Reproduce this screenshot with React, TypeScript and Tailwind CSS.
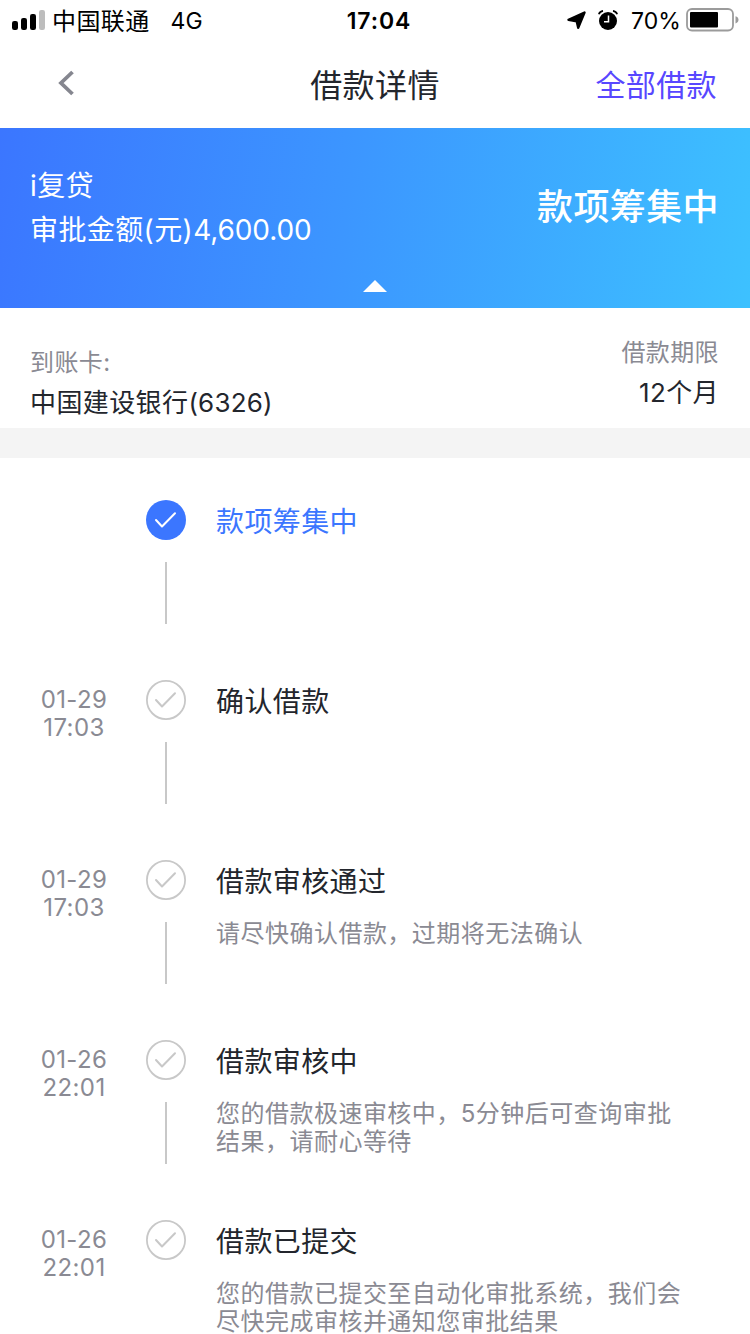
type Step = {
  title: string;
  date?: string;
  time?: string;
  lines?: string[];
  active?: boolean;
};

const STEPS: Step[] = [
  { title: "款项筹集中", active: true },
  { title: "确认借款", date: "01-29", time: "17:03" },
  {
    title: "借款审核通过",
    date: "01-29",
    time: "17:03",
    lines: ["请尽快确认借款，过期将无法确认"],
  },
  {
    title: "借款审核中",
    date: "01-26",
    time: "22:01",
    lines: ["您的借款极速审核中，5分钟后可查询审批", "结果，请耐心等待"],
  },
  {
    title: "借款已提交",
    date: "01-26",
    time: "22:01",
    lines: ["您的借款已提交至自动化审批系统，我们会", "尽快完成审核并通知您审批结果"],
  },
];

export default function App() {
  return (
    <main
      lang="zh-CN"
      className="h-[1334px] w-[750px] overflow-hidden bg-white font-[Inter,'Noto_Sans_CJK_SC',sans-serif] font-[385] tracking-[0.4px] whitespace-nowrap text-[#23262d]"
    >
      <StatusBar />
      <NavBar />
      <Banner />
      <AccountInfo />
      <div className="h-[30px] bg-[#f4f4f4]" />
      <section className="pt-[42px]">
        {STEPS.map((step, i) => (
          <TimelineRow key={step.title} step={step} last={i === STEPS.length - 1} />
        ))}
      </section>
    </main>
  );
}

function StatusBar() {
  return (
    <div className="flex h-10 items-center text-black">
      <div className="flex w-[300px] items-center pl-3">
        <svg width="33" height="20" viewBox="0 0 33 20">
          <rect x="0" y="11" width="6" height="9" rx="2.2" />
          <rect x="9" y="8" width="6" height="12" rx="2.2" />
          <rect x="18" y="4" width="6" height="16" rx="2.2" />
          <rect x="27" y="0" width="6" height="20" rx="2.2" fill="#bdbdbd" />
        </svg>
        <span className="ml-[7px] pt-[3px] text-2xl leading-10">中国联通</span>
        <span className="ml-[21px] pt-0.5 text-[23px] leading-10 tracking-normal">4G</span>
      </div>
      <div className="w-[158px] pt-0.5 text-center text-[23px] leading-10 font-semibold tracking-[0.9px]">
        17:04
      </div>
      <div className="flex flex-1 items-center justify-end pr-[11px]">
        <svg width="19" height="20" viewBox="0 0 19 20">
          <path
            d="M17.500 2.500 11.200 17.800 9.700 11.300 1.500 9.800Z"
            stroke="#000"
            strokeWidth="2.400"
            strokeLinejoin="round"
          />
        </svg>
        <svg className="ml-3" width="20" height="20" viewBox="0 0 20 20">
          <circle cx="10" cy="11" r="9" />
          <path
            d="M.8 4.200C1.500 2.500 3 1.200 5 .9M19.200 4.200C18.500 2.500 17 1.200 15 .9"
            fill="none"
            stroke="#000"
            strokeWidth="1.700"
          />
          <path d="M10.500 5.500v6.200H6" fill="none" stroke="#fff" strokeWidth="1.500" />
        </svg>
        <span className="ml-[13px] pt-0.5 text-[23px] leading-10 tracking-[0.1px]">70%</span>
        <svg className="ml-[5px]" width="53" height="24" viewBox="0 0 53 24">
          <rect x="1" y="1" width="46" height="21.500" rx="5" fill="none" stroke="#9b9b9b" strokeWidth="1.800" />
          <rect x="4" y="4" width="28" height="15.500" rx="1" />
          <path d="M49.500 8.200c2 .5 3 1.900 3 3.600s-1 3.100-3 3.600Z" fill="#9b9b9b" />
        </svg>
      </div>
    </div>
  );
}

function NavBar() {
  return (
    <header className="flex h-[88px] items-center">
      <button className="flex w-[250px] pl-[57px]" aria-label="返回">
        <svg width="18" height="26" viewBox="0 0 18 26" className="-mt-0.5">
          <path d="m15.500 2-11.500 11 11.500 11" fill="none" stroke="#85868f" strokeWidth="3.800" />
        </svg>
      </button>
      <h1 className="w-[250px] pt-1 text-center text-[32px] leading-[84px]">借款详情</h1>
      <a className="w-[250px] pt-0.5 pr-[33px] text-right text-[30px] leading-[84px] text-[#5847ff]">全部借款</a>
    </header>
  );
}

function Banner() {
  return (
    <section className="flex h-[180px] flex-col bg-[linear-gradient(99deg,#3b76ff_0%,#3c96ff_46%,#3dc1ff_100%)] text-white">
      <div className="flex h-[152px] justify-between pr-[31px] pl-[30px]">
        <div className="pt-9 text-[28px] leading-[44px]">
          <p>i复贷</p>
          <p>
            审批金额(元)<span className="tracking-[-0.1px]">4,600.00</span>
          </p>
        </div>
        <p className="pt-[53px] text-4xl leading-[52px] font-medium">款项筹集中</p>
      </div>
      <svg className="mx-auto" width="24" height="12" viewBox="0 0 24 12">
        <path d="M12 0 24 12H0Z" fill="#fff" />
      </svg>
    </section>
  );
}

function AccountInfo() {
  return (
    <section className="flex h-[120px] justify-between pr-[31px] pl-[30px]">
      <div className="pt-[35px]">
        <p className="text-2xl leading-10 text-[#8a8a93]">到账卡:</p>
        <p className="text-[26px] leading-10">
          中国建设银行<span className="tracking-[0.2px]">(6326)</span>
        </p>
      </div>
      <div className="pt-[25px] text-right">
        <p className="text-2xl leading-10 text-[#8a8a93]">借款期限</p>
        <p className="text-[26px] leading-10">12个月</p>
      </div>
    </section>
  );
}

function TimelineRow({ step, last }: { step: Step; last: boolean }) {
  return (
    <div className="flex h-[180px]">
      <div className="w-[146px] pt-1.5 pl-0.5 text-center text-2xl leading-7 text-[#8a8a93]">
        <p>{step.date}</p>
        <p>{step.time}</p>
      </div>
      <div className="flex w-10 flex-col items-center">
        <CheckMark active={step.active} />
        {!last && <div className="mt-[22px] h-[62px] w-0.5 bg-[#c8c8c8]" />}
      </div>
      <div className="pt-px pl-[30px]">
        <h2 className={step.active ? "text-[28px] leading-[42px] text-[#3b76ff]" : "text-[28px] leading-[42px]"}>
          {step.title}
        </h2>
        <div className="pt-[17px] text-2xl leading-7 tracking-[0.48px] text-[#8a8a93]">
          {step.lines?.map((line) => (
            <p key={line}>{line}</p>
          ))}
        </div>
      </div>
    </div>
  );
}

function CheckMark({ active = false }: { active?: boolean }) {
  return (
    <svg className="shrink-0" width="40" height="40" viewBox="0 0 40 40" fill="none">
      {active ? (
        <circle cx="20" cy="20" r="20" fill="#3b76ff" />
      ) : (
        <circle cx="20" cy="20" r="19.100" stroke="#c8c8c8" strokeWidth="1.800" />
      )}
      <path
        d="m10 20 6 6.500L29 13.200"
        stroke={active ? "#fff" : "#c8c8c8"}
        strokeWidth="2"
        strokeLinecap="round"
        strokeLinejoin="round"
      />
    </svg>
  );
}
